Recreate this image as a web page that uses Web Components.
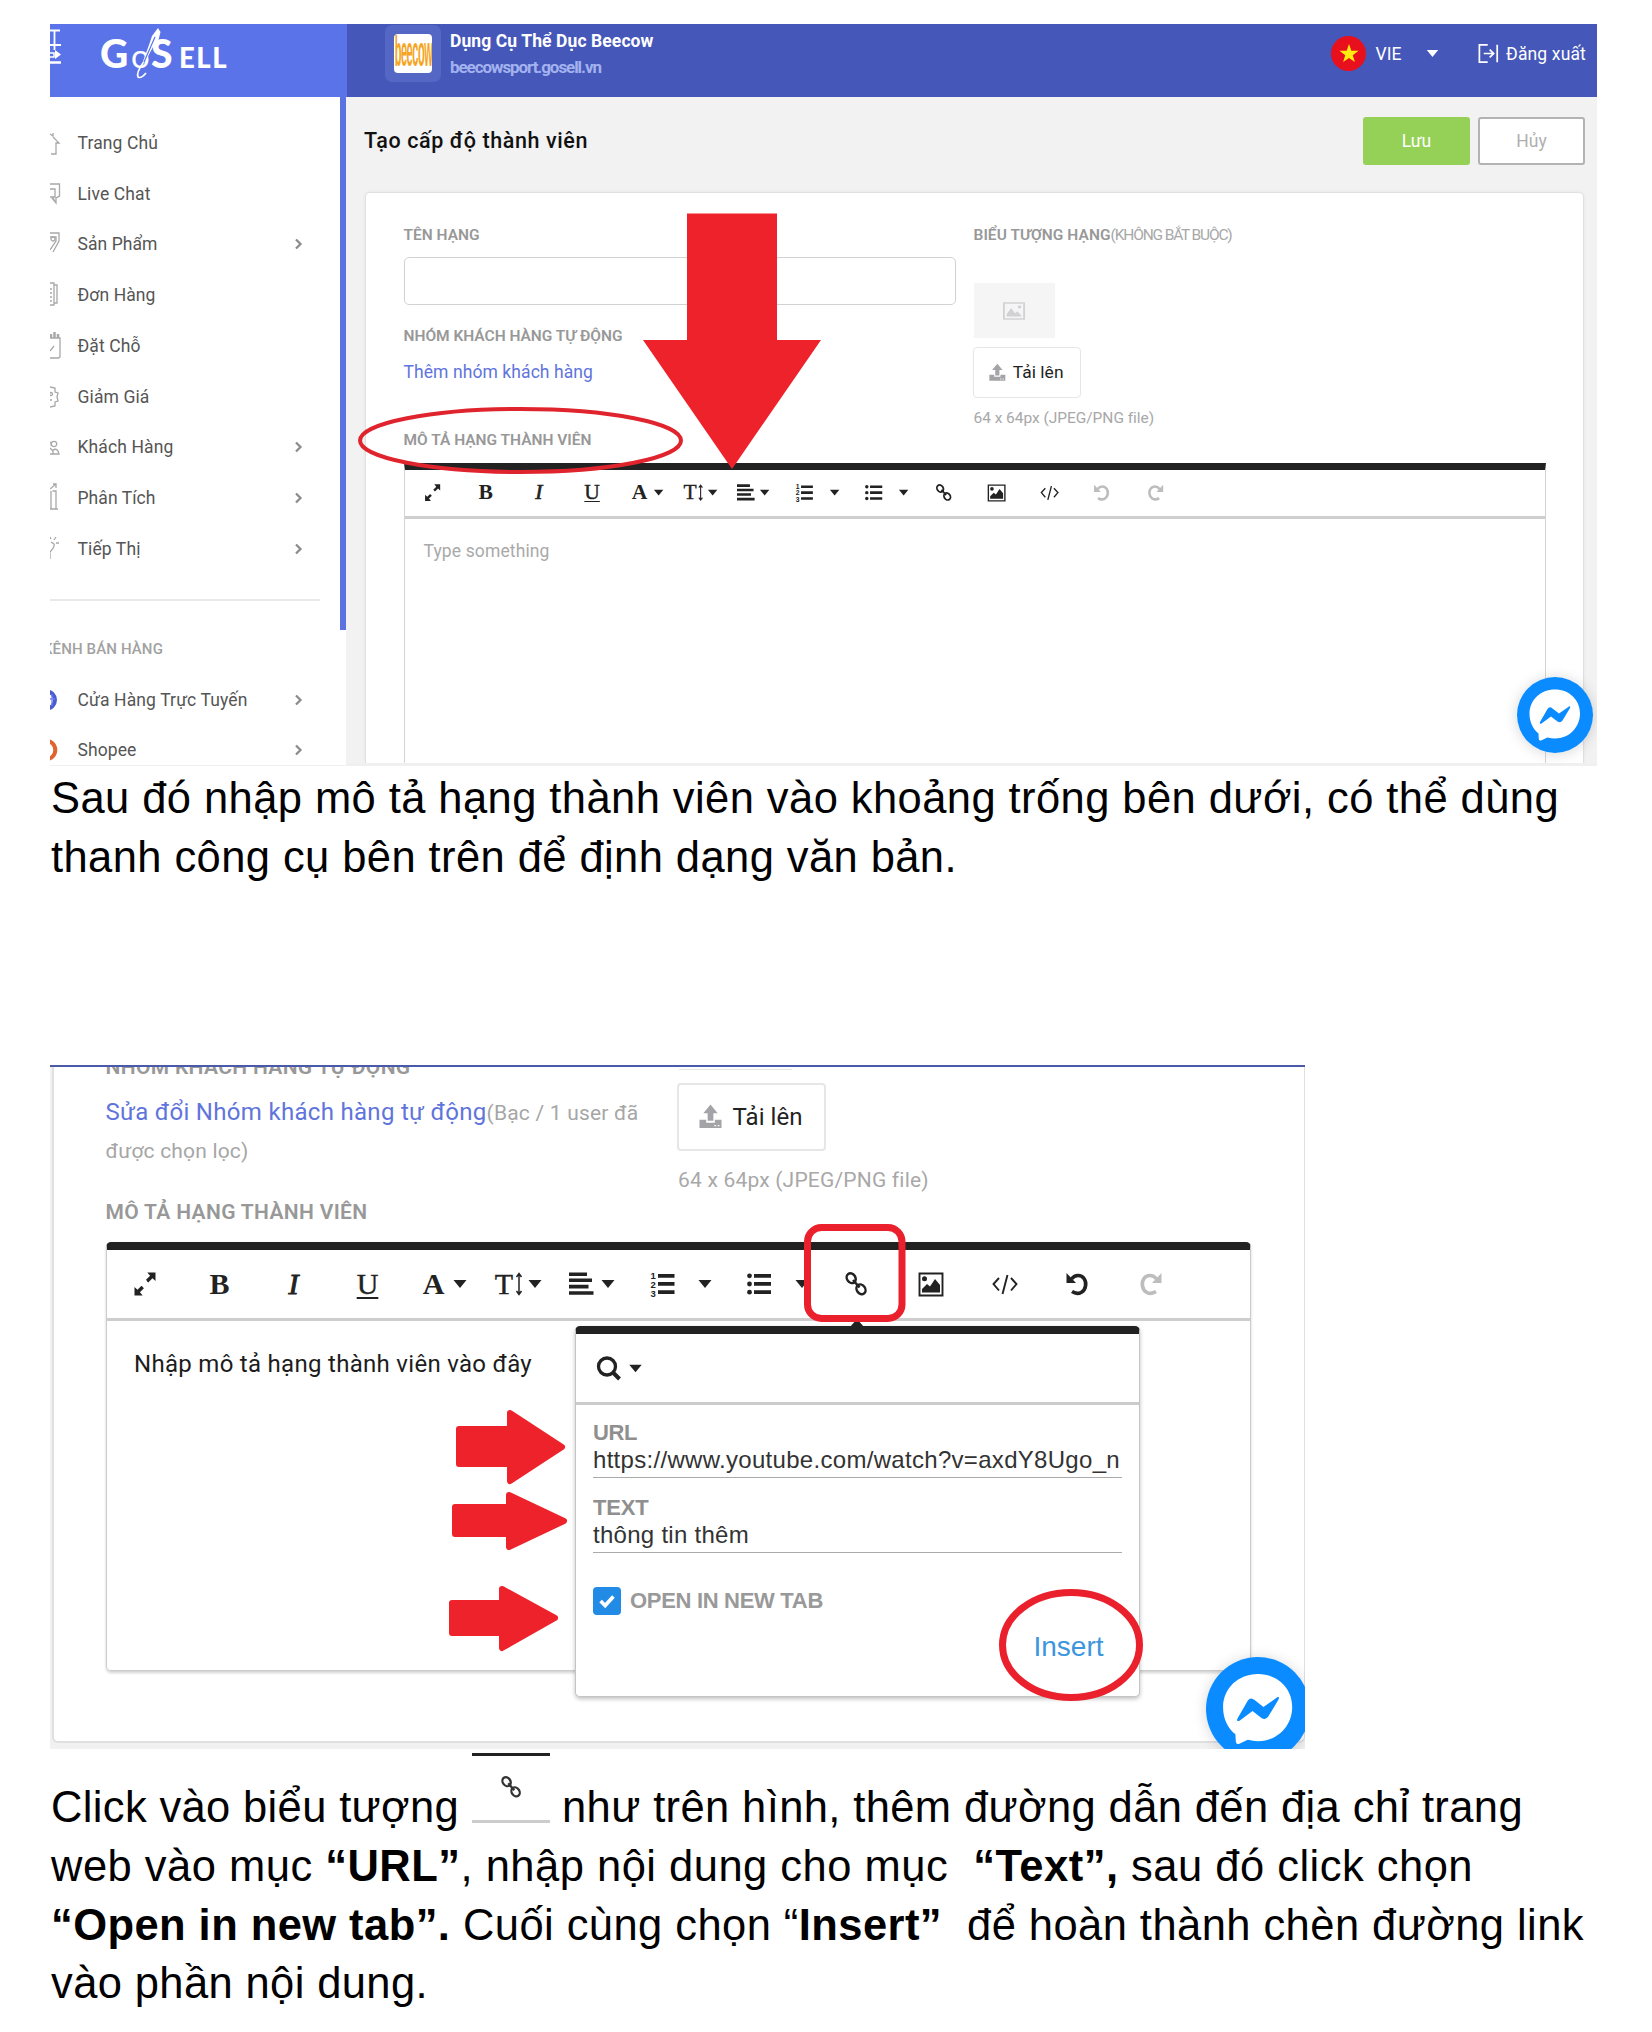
<!DOCTYPE html>
<html lang="vi">
<head>
<meta charset="utf-8">
<title>Tạo cấp độ thành viên</title>
<style>
html,body{margin:0;background:#fff}
body{width:1652px;height:2032px;overflow:hidden;font-family:Roboto,"Liberation Sans",sans-serif}
</style>
</head>
<body>
<guide-page></guide-page>
<script>
const define = (name, html, setup) => customElements.define(name, class extends HTMLElement {
  connectedCallback() {
    if (this.shadowRoot) return;
    const root = this.attachShadow({mode: 'open'});
    root.innerHTML = typeof html === 'function' ? html(this) : html;
    if (setup) setup(this, root);
  }
});

/* One line of text whose tracking is adjusted to a given width. */
define('fit-text', '<style>:host{display:inline-block;white-space:pre;vertical-align:baseline;flex:none}</style><slot></slot>', el => {
  const w = +el.getAttribute('w');
  if (!w) return;
  const own = el.getBoundingClientRect().width;
  el.style.letterSpacing = ((w - own) / [...el.textContent].length).toFixed(3) + 'px';
});

const ICONS = {
  expand: '<path d="M10.5-11.5v8.5l-3-2.8-4.3 4.3-2.4-2.4 4.3-4.3-2.8-3.3zM-10.5 11.5v-8.5l3 2.8 4-4 2.4 2.4-4 4 2.8 3.3z"/><path d="M-3.7 1.4 1.4-3.7" stroke="#fff" stroke-width="1.2"/>',
  caret: '<path d="M-6.5-4h13L0 4z"/>',
  align: '<path d="M-12-11.5H6v3.6h-18zM-12-5.5h23v3.6h-23zM-12 .8H7.5v3.6H-12zM-12 7.2h24.500v3.600h-24.500z"/>',
  ol: '<path d="M-5-10H11.500v3.700H-5zM-5-1.900H11.500v3.700H-5zM-5 6.300H11.500V10H-5z"/><g font-family="Liberation Sans" font-weight="bold" font-size="9.500"><text x="-12.500" y="-5.500">1</text><text x="-12.500" y="3.500">2</text><text x="-12.500" y="13">3</text></g>',
  ul: '<path d="M-5-10H12v3.700H-5zM-5-1.900H12v3.700H-5zM-5 6.300H12V10H-5z"/><circle cx="-9.500" cy="-8.200" r="2.400"/><circle cx="-9.500" cy="0" r="2.400"/><circle cx="-9.500" cy="8.200" r="2.400"/>',
  link: '<g fill="none" stroke="currentColor" stroke-width="2.500"><ellipse cx="-4.800" cy="-5.800" rx="4.200" ry="5.200" transform="rotate(-35 -4.800 -5.800)"/><ellipse cx="5" cy="5.300" rx="4.200" ry="5.200" transform="rotate(-35 5 5.300)"/><path d="M-3-4 3.500 3.500"/></g>',
  image: '<path d="M-11.500-10.500h23v22h-23z" fill="none" stroke="currentColor" stroke-width="1.900"/><circle cx="-6.500" cy="-5.200" r="2.500"/><path d="M-9 8.500V5l5-5 3 2.500L4-5 9 1V8.500z"/>',
  code: '<path d="M-6-6-11.500 0-6 6.500M6-6l5.500 6L6 6.500M2.500-9-2.500 10" fill="none" stroke="currentColor" stroke-width="1.900"/>',
  undo: '<path d="M-5.500-5C-2-9.500 4-9.600 7-5.500c3 4.100 2 11-2.500 13.700C1.500 10-2 9.600-5 7.600" fill="none" stroke="currentColor" stroke-width="3.600"/><path d="M-10.500-11v10h9.500z"/>',
  redo: '<g transform="scale(-1 1)"><path d="M-5.500-5C-2-9.500 4-9.600 7-5.500c3 4.100 2 11-2.500 13.700C1.500 10-2 9.600-5 7.600" fill="none" stroke="currentColor" stroke-width="3.600"/><path d="M-10.500-11v10h9.500z"/></g>',
  sizer: '<path d="M0-10V10M-2.500-7 0-10.500 2.500-7M-2.500 7 0 10.500 2.500 7" fill="none" stroke="currentColor" stroke-width="1.500"/>',
  upload: '<path d="M0-12.500 7.500-3.500H3V4.500H-3V-3.500H-7.500z"/><path d="M-11.500 3.500h7V6.500h9V3.500h7V12h-23z"/><path d="M4 9.500h1.800M7.500 9.500h1.800" stroke="#fff" stroke-width="1.500"/>',
  search: '<circle cx="-2" cy="-1.500" r="8.500" fill="none" stroke="currentColor" stroke-width="3.300"/><path d="M4 4.500 10.500 11" stroke="currentColor" stroke-width="4"/>',
  check: '<path d="M-7 0-2 5 7-5" fill="none" stroke="currentColor" stroke-width="4"/>',
  photo: '<path d="M-11-11h22v22h-22z" fill="none" stroke="currentColor" stroke-width="2"/><path d="M-8 7.500V4l5-8 4 7 2.500-2.500L8 6v1.500z"/><circle cx="6" cy="-5.500" r="2"/>',
  chevron: '<path d="M-4-9 5 0-4 9" fill="none" stroke="currentColor" stroke-width="4.500"/>',
  logout: '<path d="M-1-11H-11.500V11H-1M-6 0H6M1.500-5 6.500 0 1.500 5M11-11V11" fill="none" stroke="currentColor" stroke-width="2.200"/>',
  star: '<path d="M0-12 2.800-3.800H11.500L4.500 1.400 7.100 9.700 0 4.700-7.100 9.700-4.500 1.400-11.500-3.800H-2.800z"/>'
};
define('ui-icon', el => {
  const s = el.getAttribute('size') || 24;
  return `<style>:host{display:block;flex:none;width:${s}px;height:${s}px}svg{display:block;overflow:visible}</style>
  <svg width="${s}" height="${s}" viewBox="-12 -12 24 24" fill="currentColor">${ICONS[el.getAttribute('name')]}</svg>`;
});

define('editor-toolbar', el => {
  const k = +el.getAttribute('scale');
  const off = (el.getAttribute('off') || '').split(',');
  const items = [['expand',38.500,21],['B',113,24],['I',187,24],['U',261,24],['A',327,24],['caret',353.500,24],['T',397.500,22],['sizer',412.500,8],
    ['caret',428,24],['align',474.500,24],['caret',501.500,24],['ol',556.500,24],['caret',598.500,24],['ul',652.500,24],['caret',695,24],
    ['link',749.500,24],['image',824,24],['code',898,24],['undo',970.500,24],['redo',1044.500,24]];
  let x = 0, out = '';
  for (const [n, c, w] of items) {
    const left = (c - w / 2) * k, ml = left - x; x = left + w * k;
    out += `<span class="${n.length === 1 ? 'l ' + n : ''} ${off.includes(n) ? 'off' : ''}" style="width:${w * k}px;margin-left:${ml.toFixed(2)}px">${n.length === 1 ? n : `<ui-icon name="${n}" size="${24 * k}"></ui-icon>`}</span>`;
  }
  return `<style>:host{display:flex;align-items:center;color:#222}
  span{flex:none;display:flex;justify-content:center;align-items:center}
  .l{font:500 ${30 * k}px/1 "Liberation Serif",serif;-webkit-text-stroke:.4px currentColor}
  .B,.A{font-weight:bold;-webkit-text-stroke:0}.I{font-style:italic;-webkit-text-stroke:${.9 * k}px currentColor}
  .U{text-decoration:underline;text-decoration-thickness:${2 * k}px;text-underline-offset:${3 * k}px}
  .off{color:#bdbdbd}</style>${out}`;
});

define('side-item', el => `<style>
  :host{display:flex;flex:none;align-items:center;height:50.75px;font-size:17.500px;line-height:24px;color:#555}
  svg{display:block;flex:none;width:14px;height:32px;margin-right:13.500px;color:#a8a8a8}
  ui-icon{margin-left:auto;margin-right:36px;color:#8c8c8c}
  </style><svg viewBox="0 -16 14 32" fill="none" stroke="currentColor" stroke-width="1.300">${{
    home:'<path d="M0-9 3-7V-10M3-6 9 0H6V11H1"/>',
    chat:'<path d="M0-10H9.500V2L6 4V9L2 4M0-5H5V3H0M3 4 6 9"/>',
    tag:'<path d="M0-11H9V-3L3 8M0-7H6V-3L0 6"/><circle cx="3" cy="-5" r="2"/>',
    order:'<path d="M0-12H4V10H0M4-10H7V8H4M0-6H2M0-2H2M0 2H2M0 6H2"/>',
    book:'<path d="M0-8H10V10Q10 12 8 12H0M0 5 4 0"/><path d="M1-12V-8M4.500-14V-8M8-12V-8" stroke-width="2.500"/>',
    sale:'<path d="M0-10 5-9 5-5 8-4 7 0 8 4 5 5 5 9 0 10M0 3H2"/><circle cx="1" cy="-3" r="1.500"/>',
    user:'<circle cx="4" cy="-3" r="2.700"/><path d="M0-5Q2-4 1-1M0 7H3V3Q6 1 8 4L9 7H3M0 1 3 4"/>',
    chart:'<path d="M1-7V11M2.500-7H6V11M0 11H8M0-9 6-14M3-14H6V-10"/>',
    market:'<path d="M0 10 0 3Q5-2 4-5L1-7M4-9 6-12M6-6H9M1-10 0-12"/>',
    web:'<circle cx="-3.500" cy="0" r="8.500" stroke="#4a5bd0" stroke-width="4"/><path d="M0-1H5M2-6V6" stroke="#6f80ee"/>',
    shopee:'<circle cx="-4" cy="0" r="9.300" stroke="#e2622f" stroke-width="4"/>'
  }[el.getAttribute('icon')]}</svg><slot></slot>${el.hasAttribute('more') ? '<ui-icon name="chevron" size="12"></ui-icon>' : ''}`);

define('app-header', `<style>
  :host{display:flex;height:73px;background:#4557b9;color:#fff;overflow:hidden}
  .brand{width:296.500px;flex:none;background:#5b73e8;display:flex;position:relative}
  .edge{flex:none;width:12px;height:44px}
  .logo{display:flex;align-items:baseline;font:900 39px/46px Lato,sans-serif;margin:6px 0 0 38px;height:46px;width:130px}
  .logo .o{font-size:33px;font-weight:400}
  .logo .s{font-size:27.500px}
  .needle{position:absolute;left:80px;top:4px}
  .shop{width:56px;height:57px;border-radius:7px;background:#5567c4;margin:1px 9px 0 38.500px;display:flex;align-items:center;justify-content:center}
  .pic{width:38px;height:39px;border-radius:4px;background:#fff;display:flex;align-items:center;justify-content:center;overflow:hidden}
  .pic b{display:block;font:bold 12px/14px "Liberation Sans";color:#f5a51f;transform:translateY(-2px) scale(.92,3.500);letter-spacing:-.5px}
  .names{display:flex;flex-direction:column;padding-top:5px;font-size:17.500px;font-weight:700;line-height:24px;gap:2px}
  .names .u{color:#a3b2ee;font-size:17px;font-weight:700}
  .right{margin-left:auto;display:flex;align-items:center;height:59px;padding-right:11px;font-size:17.500px;font-weight:400}
  .flag{width:35px;height:35px;border-radius:50%;background:#e8101c;color:#ffec10;display:flex;align-items:center;justify-content:center;margin-right:9.500px}
  </style>
  <div class="brand"><svg class="edge" viewBox="0 0 12 44" fill="none" stroke="#fff" stroke-width="1.800"><path d="M0 6.500H10M4.500 6.500V20M0 21H11M4.500 21V26"/><path d="M0 29H4V33H0" stroke-width="1.500"/><path d="M5 26 11 30.500 5 35Z" fill="#fff" stroke="none"/><path d="M0 38.500H11" stroke-width="2.500"/></svg>
    <div class="logo"><fit-text w="31">G</fit-text><fit-text class="o" w="20">o</fit-text><fit-text w="28">S</fit-text><fit-text class="s" w="49">ELL</fit-text></div>
    <svg class="needle" width="40" height="54" viewBox="0 0 40 54"><path d="M28 0 30.500 4 28.500 12 23 19 15 34 12 36 19 17 22 8Z" fill="#fff"/><path d="M25 9 14 34" stroke="#5b73e8" stroke-width="1.200"/><path d="M13 35Q6 45 8 49 11 51 16 45" fill="none" stroke="#fff" stroke-width="1.700"/></svg>
  </div>
  <div class="shop"><div class="pic"><b>beecow</b></div></div>
  <div class="names"><fit-text w="203.500">Dụng Cụ Thể Dục Beecow</fit-text><fit-text class="u" w="181">beecowsport.gosell.vn</fit-text></div>
  <div class="right"><div class="flag"><ui-icon name="star" size="20"></ui-icon></div><fit-text w="26">VIE</fit-text>
    <ui-icon name="caret" size="21" style="margin:0 36.500px 0 20px"></ui-icon><ui-icon name="logout" size="19" style="margin-right:8px"></ui-icon><fit-text w="80">Đăng xuất</fit-text></div>`);

define('side-bar', `<style>
  :host{display:flex;flex:none;width:296px;background:#fff;height:668px;overflow:hidden}
  nav{width:290px;display:flex;flex-direction:column;padding-top:20.500px;background:#fff;flex:none}
  hr{border:0;height:2px;background:#e9e9eb;width:270px;margin:24.500px 0 38px;flex:none}
  .cap{margin-left:-7px;height:20px;line-height:20px;font-size:15px;font-weight:500;color:#a2a2a2;margin-bottom:15.500px;flex:none}
  .bar{width:6px;height:533px;background:#5b73e0;flex:none}
  </style><nav>
  <side-item icon="home"><fit-text w="80.500">Trang Chủ</fit-text></side-item>
  <side-item icon="chat"><fit-text w="73">Live Chat</fit-text></side-item>
  <side-item icon="tag" more><fit-text w="80">Sản Phẩm</fit-text></side-item>
  <side-item icon="order"><fit-text w="78">Đơn Hàng</fit-text></side-item>
  <side-item icon="book"><fit-text w="63">Đặt Chỗ</fit-text></side-item>
  <side-item icon="sale"><fit-text w="72">Giảm Giá</fit-text></side-item>
  <side-item icon="user" more><fit-text w="96">Khách Hàng</fit-text></side-item>
  <side-item icon="chart" more><fit-text w="78">Phân Tích</fit-text></side-item>
  <side-item icon="market" more><fit-text w="63">Tiếp Thị</fit-text></side-item>
  <hr><div class="cap"><fit-text w="120">KÊNH BÁN HÀNG</fit-text></div>
  <side-item icon="web" more><fit-text w="170">Cửa Hàng Trực Tuyến</fit-text></side-item>
  <side-item icon="shopee" more><fit-text w="59">Shopee</fit-text></side-item>
  </nav><div class="bar"></div>`);

define('upload-button', el => {
  const k = +el.getAttribute('scale');
  return `<style>:host{display:flex;align-items:center;box-sizing:border-box;border:${k < 1 ? 1.500 : 2}px solid #e6e6e8;border-radius:4px;background:#fff;width:${149 * k}px;height:${68 * k + (k < 1 ? 1.500 : 0)}px;margin-left:-.500px;padding-left:${20 * k}px;gap:${10.500 * k}px;color:#a4a4a8;font-size:${24 * k}px}
  span{color:#222;display:flex}</style><ui-icon name="upload" size="${23 * k}"></ui-icon><span><fit-text w="${70 * k}">Tải lên</fit-text></span>`;
});

define('chat-bubble', el => {
  const d = el.getAttribute('size');
  return `<style>:host{display:block;border-radius:50%;width:${d}px;height:${d}px;box-shadow:0 1px 14px rgba(0,0,0,.16)}svg{display:block}</style>
  <svg width="${d}" height="${d}" viewBox="-38 -38 76 76"><circle r="38" fill="#0a8bff"/><path d="M0-25.500C14.500-25.500 25-15 25-1.500S14.500 23.500 0 23.500c-2.600 0-5-.3-7.500-1L-14 25.500Q-16 26-16.200 24L-16.500 18.500C-22 14-25.500 7-25.500-1-25.500-15-14.500-25.500 0-25.500Z" fill="#fff"/><path d="M-15 7-7.500-6Q-5.500-9-2.500-6.500L4-1.500 14-8.500Q16-9.500 15-7L7.500 5.500Q5.500 8.500 2.500 6.500L-4 1.500-13.500 8.500Q-16 9.500-15 7Z" fill="#0a8bff"/></svg>`;
});

define('rank-form', `<style>
  :host{flex:1;display:flex;flex-direction:column;background:#f2f2f2;padding:19.500px 12px 0 19px;box-sizing:border-box;height:665.500px;overflow:hidden}
  .top{display:flex;height:48px;align-items:center;gap:8px}
  h1{margin:0 auto 0 -1px;font-size:21.500px;line-height:28px;font-weight:500;color:#111}
  .btn{width:107px;height:48px;box-sizing:border-box;border-radius:3px;display:flex;align-items:center;justify-content:center;font-size:17.500px}
  .save{background:#94d156;color:#fff}.cancel{background:#fff;border:2px solid #b3b3b3;color:#b0b0b0}
  .card{margin-top:27.500px;margin-right:1px;flex:1;background:#fff;border:1.500px solid #e0e0e3;border-bottom:0;border-radius:5px 5px 0 0;padding:32px 37px 0 37.500px;display:flex;flex-direction:column;box-shadow:0 0 4px rgba(0,0,0,.05)}
  .grid{display:grid;grid-template-columns:552px 1fr;column-gap:18px;height:205px;flex:none}
  .col{display:flex;flex-direction:column;align-items:flex-start}
  .lab{font-size:15.500px;line-height:20px;height:20px;font-weight:600;color:#989898}
  .lab span{font-weight:400;color:#a8a8a8}
  .input{width:552px;height:48px;box-sizing:border-box;border:1.500px solid #d2d2d6;border-radius:5px;margin:12px 0 21px}
  .link{margin-top:14px;font-size:17.500px;line-height:24px;color:#5f74dc}
  .thumb{width:81px;height:55px;background:#f5f5f5;margin:38px 0 9px;display:flex;align-items:center;justify-content:center;color:#d2d2d6}
  .hint{font-size:15.500px;line-height:22px;color:#a8a8a8;margin-top:9px}
  .ed{margin-top:12.500px;flex:1;border:1px solid #d4d4d4;border-bottom:0;border-top:7px solid #222;display:flex;flex-direction:column}
  editor-toolbar{height:46.500px;border-bottom:3px solid #cfcfcf}
  .ph{padding:20px 0 0 19px;font-size:17.500px;line-height:24px;color:#a9a9a9}
  </style>
  <div class="top"><h1><fit-text w="224">Tạo cấp độ thành viên</fit-text></h1><div class="btn save">Lưu</div><div class="btn cancel">Hủy</div></div>
  <div class="card"><div class="grid">
    <div class="col"><div class="lab"><fit-text w="76">TÊN HẠNG</fit-text></div><div class="input"></div>
      <div class="lab"><fit-text w="219">NHÓM KHÁCH HÀNG TỰ ĐỘNG</fit-text></div><div class="link"><fit-text w="189.500">Thêm nhóm khách hàng</fit-text></div></div>
    <div class="col"><div class="lab"><fit-text w="137">BIỂU TƯỢNG HẠNG</fit-text><fit-text w="121"><span>(KHÔNG BẮT BUỘC)</span></fit-text></div>
      <div class="thumb"><ui-icon name="photo" size="22" style="transform:scaleY(.8)"></ui-icon></div><upload-button scale="0.725"></upload-button>
      <div class="hint"><fit-text w="180">64 x 64px (JPEG/PNG file)</fit-text></div></div>
  </div>
  <div class="lab"><fit-text w="188">MÔ TẢ HẠNG THÀNH VIÊN</fit-text></div>
  <div class="ed"><editor-toolbar scale="0.719" off="undo,redo"></editor-toolbar><div class="ph"><fit-text w="126">Type something</fit-text></div></div>
  </div>`);

define('admin-shot', `<style>
  :host{display:block;position:relative;width:1547px;height:741.500px;overflow:hidden;background:#f0f0f0}
  .body{display:flex}
  .marks{position:absolute;left:0;top:0}
  chat-bubble{position:absolute;left:1467px;top:652.500px}
  </style><app-header></app-header><div class="body"><side-bar></side-bar><rank-form></rank-form></div>
  <chat-bubble size="76"></chat-bubble>
  <svg class="marks" width="1547" height="741"><path d="M637 189.500H727V316H771L682 445 593 316H637Z" fill="#ee222b"/><ellipse cx="470.500" cy="416.500" rx="160.500" ry="31.500" fill="none" stroke="#e0242e" stroke-width="4"/></svg>`);

define('link-popup', `<style>
  :host{display:flex;flex-direction:column;box-sizing:border-box;width:565px;height:371px;background:#fff;border:1px solid #c4c4c4;border-top:8.500px solid #222;border-radius:5px;box-shadow:0 2px 4px rgba(0,0,0,.25);color:#333;font-family:"Liberation Sans",Arial,sans-serif}
  .bar{display:flex;align-items:center;height:68px;border-bottom:3px solid #ccc;padding-left:21.500px;gap:3px;color:#222;flex:none}
  .f{margin:0 17px 0 17.500px;border-bottom:1.500px solid #aaa;height:72.500px;box-sizing:border-box;display:flex;flex-direction:column;justify-content:flex-end;align-items:flex-start}
  .f b{font-size:22px;line-height:26px;color:#8f8f8f}
  .f span{font-size:24px;line-height:28px;padding-bottom:3px}
  .chk{display:flex;align-items:center;margin:34.500px 0 0 17.500px;gap:9px;height:28px}
  .box{width:28px;height:28px;border-radius:4px;background:#228be6;color:#fff;display:flex;align-items:center;justify-content:center}
  .chk b{font-size:22px;line-height:26px;color:#999}
  .ins{align-self:flex-end;margin:16px 35px 0 0;font-size:28px;line-height:32px;color:#3c96de}
  </style>
  <div class="bar"><ui-icon name="search"></ui-icon><ui-icon name="caret" size="23"></ui-icon></div>
  <div class="f"><b><fit-text w="44">URL</fit-text></b><span><fit-text w="527">https://www.youtube.com/watch?v=axdY8Ugo_n</fit-text></span></div>
  <div class="f" style="height:75px"><b><fit-text w="55.500">TEXT</fit-text></b><span><fit-text w="156">thông tin thêm</fit-text></span></div>
  <div class="chk"><div class="box"><ui-icon name="check" size="22"></ui-icon></div><b><fit-text w="193">OPEN IN NEW TAB</fit-text></b></div>
  <div class="ins"><fit-text w="70">Insert</fit-text></div>`);

define('link-shot', `<style>
  :host{display:block;position:relative;box-sizing:border-box;width:1255px;height:683.500px;overflow:hidden;background:#f1f1f1;border-top:2px solid #4a5aa8}
  .card{margin:0 0 0 2px;width:1253px;box-sizing:border-box;height:676px;background:#fff;border:solid #e0e0e3;border-width:0 1.500px 2px 2px;border-radius:0 0 6px 6px;padding:0 0 0 51.500px;overflow:hidden}
  .grid{display:grid;grid-template-columns:572px 1fr;height:133px}
  .lab{font-size:21px;line-height:24px;height:24px;font-weight:600;color:#989898}
  .grp{font-size:21px;line-height:37.500px;color:#a6a6a6;margin-top:16.500px}
  .grp span{font-size:24px;color:#5f74dc;line-height:30px}
  .right{padding-top:2px}
  .ghost{width:113px;height:1px;background:#e6e6e6;margin:0 0 12.500px 1px}
  .hint{font-size:21px;line-height:28px;color:#a8a8a8;margin:15.500px 0 0 .500px}
  .ed{width:1145px;height:429px;margin-top:18px;box-sizing:border-box;border:1px solid #ccc;border-top:8.500px solid #222;border-radius:5px;box-shadow:0 2px 3px rgba(0,0,0,.18)}
  editor-toolbar{height:67.500px;border-bottom:3px solid #cdcdcd}
  .txt{padding:27px 0 0 27.500px;font-size:24px;line-height:32px;color:#1c1c1c}
  link-popup{position:absolute;left:524.500px;top:259px}
  chat-bubble{position:absolute;left:1156px;top:589.500px}
  .marks{position:absolute;left:0;top:-2px}
  </style>
  <div class="card"><div class="grid"><div>
    <div class="lab" style="margin-top:-12.500px"><fit-text w="305">NHÓM KHÁCH HÀNG TỰ ĐỘNG</fit-text></div>
    <div class="grp"><fit-text w="381"><span>Sửa đổi Nhóm khách hàng tự động</span></fit-text><fit-text w="152">(Bạc / 1 user đã</fit-text><br><fit-text w="143">được chọn lọc)</fit-text></div>
    </div><div class="right"><div class="ghost"></div><upload-button scale="1"></upload-button><div class="hint"><fit-text w="250">64 x 64px (JPEG/PNG file)</fit-text></div></div></div>
    <div class="lab"><fit-text w="262">MÔ TẢ HẠNG THÀNH VIÊN</fit-text></div>
    <div class="ed"><editor-toolbar scale="1" off="redo"></editor-toolbar><div class="txt"><fit-text w="398">Nhập mô tả hạng thành viên vào đây</fit-text></div></div>
  </div>
  <link-popup></link-popup>
  <chat-bubble size="104"></chat-bubble>
  <svg class="marks" width="1255" height="683"><path d="M800 262 807 254 814 262Z" fill="#222"/>
    <g fill="#ee222b" stroke="#ee222b" stroke-width="6" stroke-linejoin="round"><path d="M409 364H460V348L512 382 460 416V399H409Z"/><path d="M405 442H459V430L514 456 459 482V469H405Z"/><path d="M402 538H452V524L505 553 452 583V568H402Z"/></g>
    <g fill="none" stroke="#ea212c" stroke-width="7"><rect x="757.500" y="162.500" width="94.500" height="91" rx="14"/><ellipse cx="1021" cy="580" rx="68.500" ry="52.500"/></g></svg>`);

define('guide-page', `<style>
  :host{display:flex;flex-direction:column;padding:24px 50px 0;box-sizing:border-box;width:1652px;height:2032px}
  .p{font-family:"Liberation Sans",Arial,sans-serif;font-size:43.500px;line-height:58.750px;color:#000;padding-left:1px;flex:none}
  .p fit-text{display:block;width:max-content}
  .row{display:flex;align-items:flex-start;height:58.750px}
  .chip{width:78px;height:70px;box-sizing:border-box;margin:-25.500px 12.500px 0;border-top:3.500px solid #222;border-bottom:3px solid #ccc;display:flex;justify-content:center;padding-top:20px;color:#333;flex:none}
  </style>
  <admin-shot></admin-shot>
  <div class="p" style="margin:3.500px 0 178.500px"><fit-text w="1508">Sau đó nhập mô tả hạng thành viên vào khoảng trống bên dưới, có thể dùng</fit-text><fit-text w="906">thanh công cụ bên trên để định dạng văn bản.</fit-text></div>
  <link-shot></link-shot>
  <div class="p" style="margin-top:29.500px"><div class="row"><fit-text w="408">Click vào biểu tượng</fit-text><div class="chip"><ui-icon name="link" size="22"></ui-icon></div><fit-text w="961">như trên hình, thêm đường dẫn đến địa chỉ trang</fit-text></div>
  <fit-text w="1422">web vào mục <b>“URL”</b>, nhập nội dung cho mục  <b>“Text”,</b> sau đó click chọn</fit-text><fit-text w="1533"><b>“Open in new tab”.</b> Cuối cùng chọn “<b>Insert”</b>  để hoàn thành chèn đường link</fit-text><fit-text w="377">vào phần nội dung.</fit-text></div>`);
</script>
</body>
</html>
